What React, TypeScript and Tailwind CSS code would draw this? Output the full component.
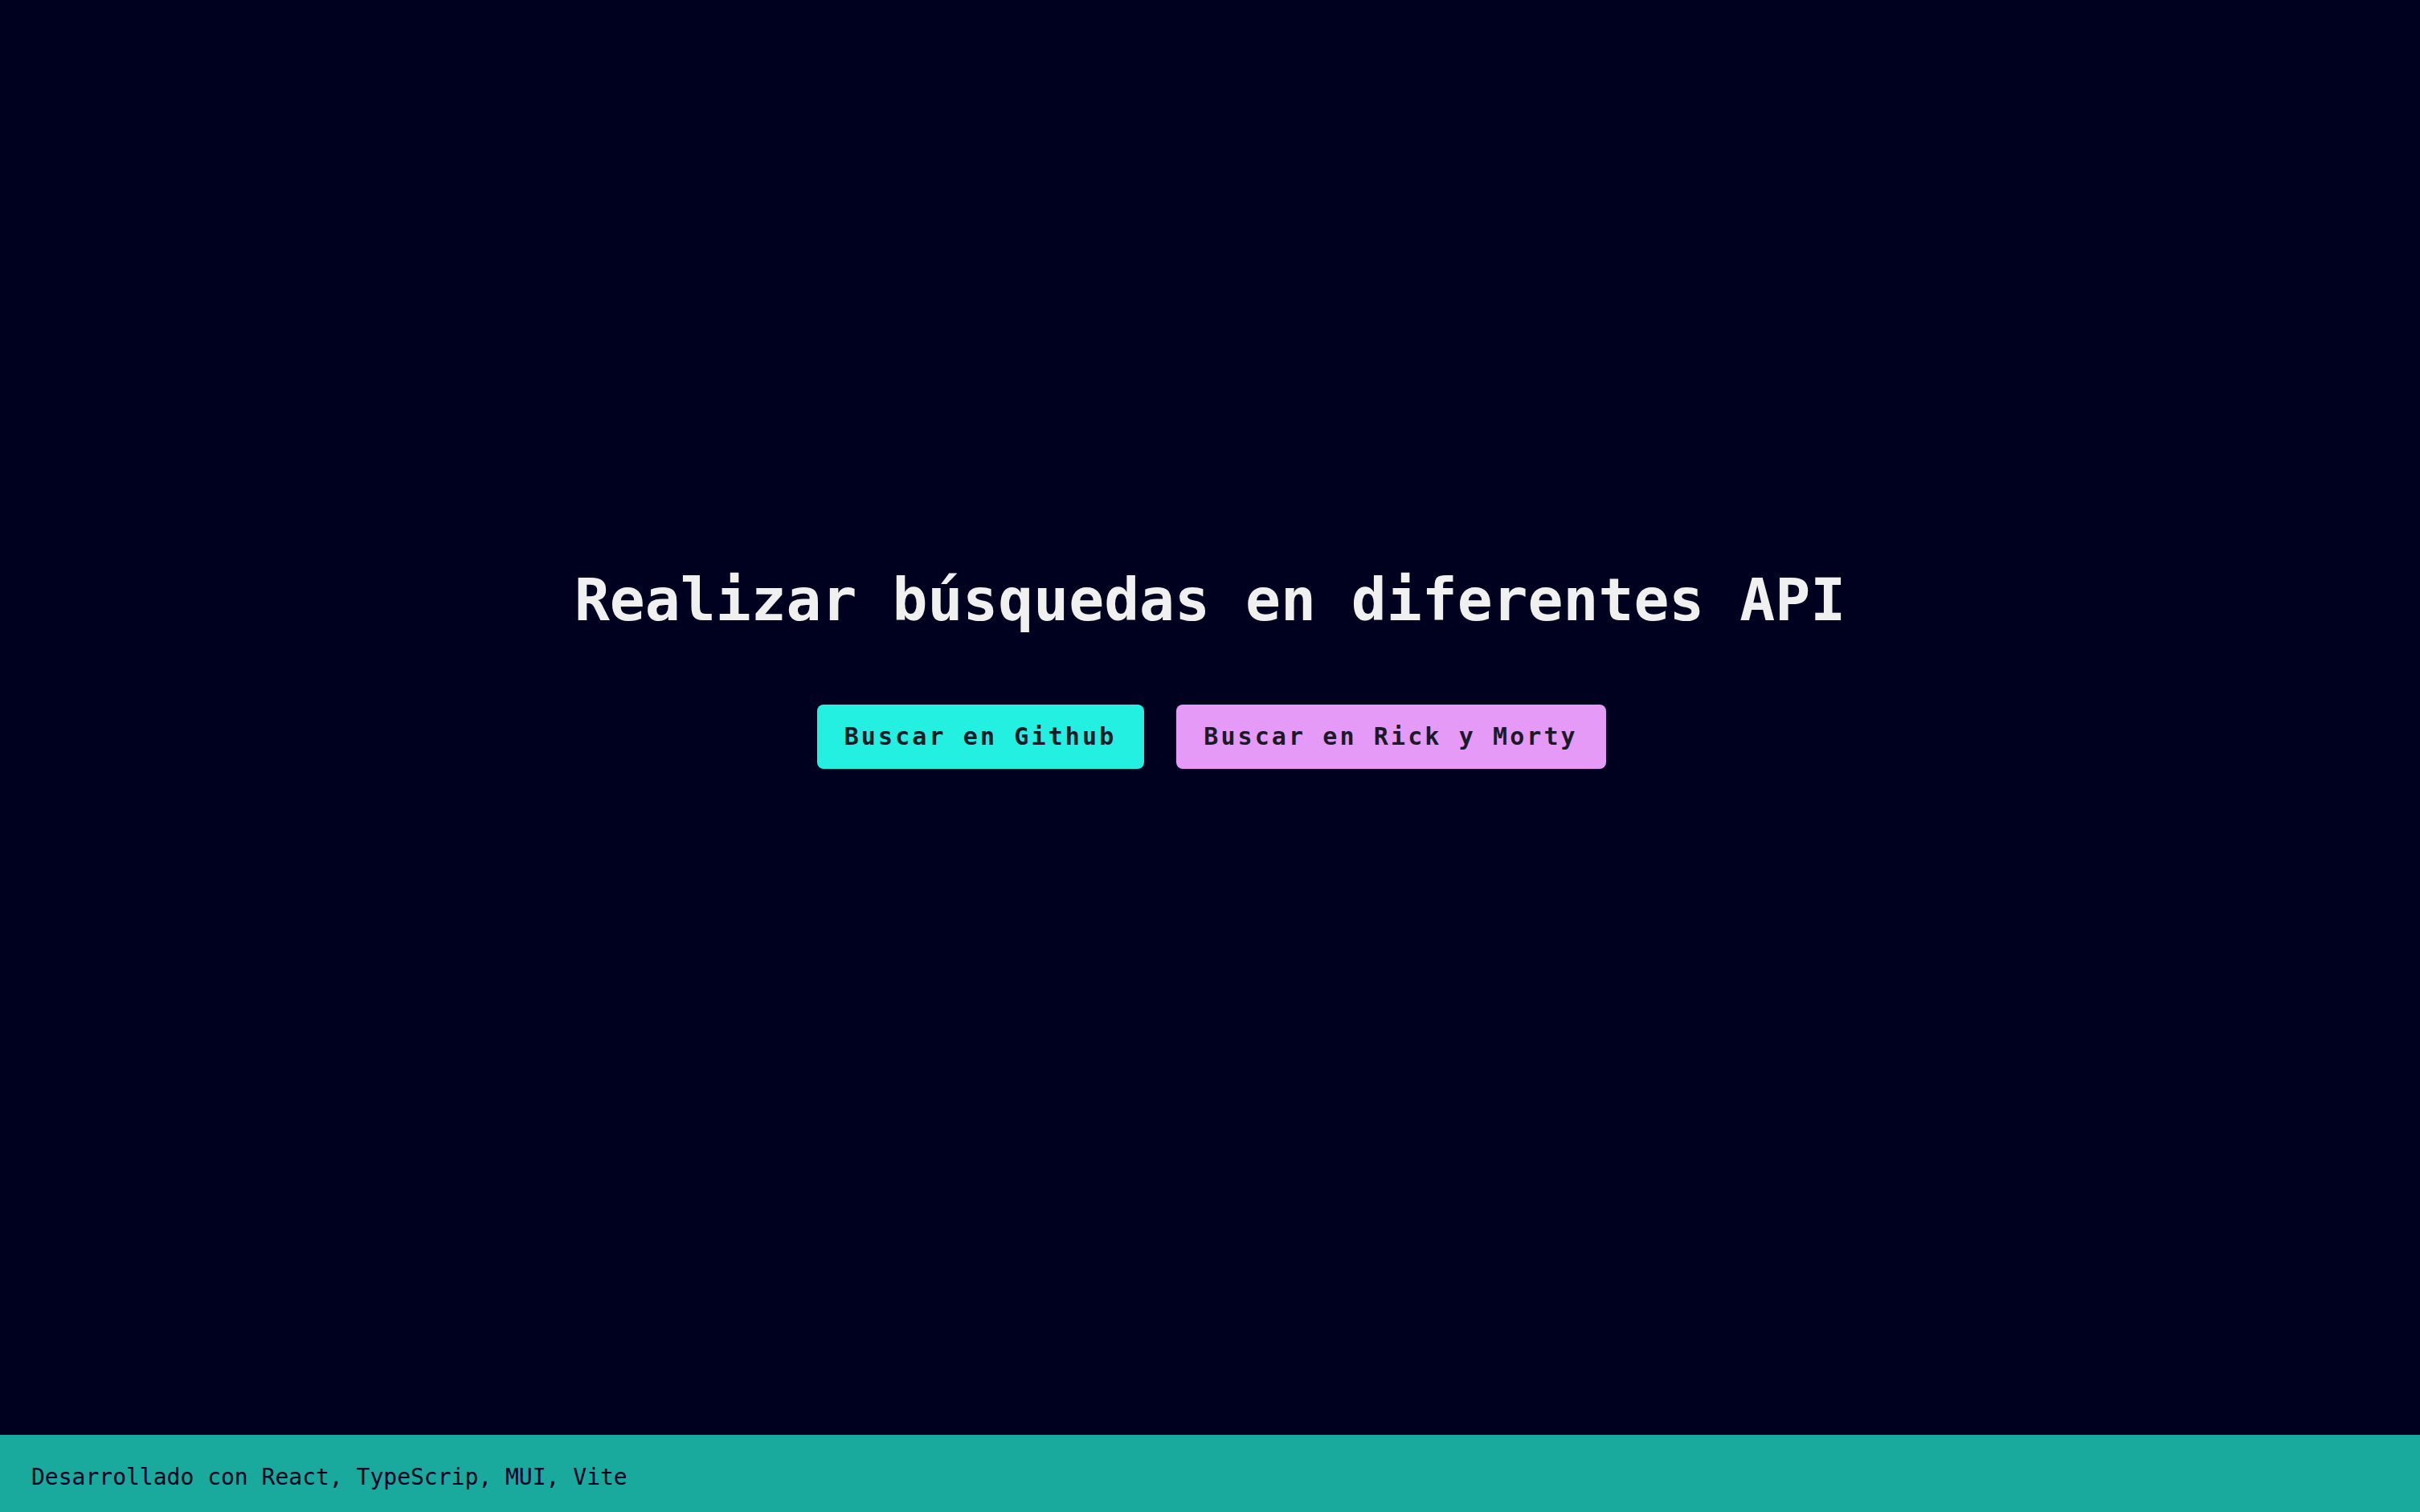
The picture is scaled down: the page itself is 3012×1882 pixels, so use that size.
const mono = "font-['DejaVu_Sans_Mono','Liberation_Mono',monospace]";

export default function App() {
  return (
    <div className={`flex min-h-screen w-full flex-col bg-[#00001f] ${mono}`}>
      <main className="flex flex-1 flex-col items-center pt-[703px]">
        <h1 className="text-[73px] font-bold leading-[1.2] text-[#f0f0f0]">
          Realizar búsquedas en diferentes API
        </h1>
        <div className="ml-[3px] mt-[86px] flex gap-[40px]">
          <button className="flex h-[80px] w-[407px] items-center justify-center rounded-[8px] bg-[#24f0e2] text-[30px] font-bold tracking-[3.1px] text-[#1b1b27]">
            Buscar en Github
          </button>
          <button className="flex h-[80px] w-[535px] items-center justify-center rounded-[8px] bg-[#e69af8] text-[30px] font-bold tracking-[3.1px] text-[#1b1b27]">
            Buscar en Rick y Morty
          </button>
        </div>
      </main>
      <footer className="flex h-[96px] items-center bg-[#19a99d] pl-[39px] pt-[10px] text-[28px] text-[#00001f]">
        Desarrollado con React, TypeScrip, MUI, Vite
      </footer>
    </div>
  );
}
